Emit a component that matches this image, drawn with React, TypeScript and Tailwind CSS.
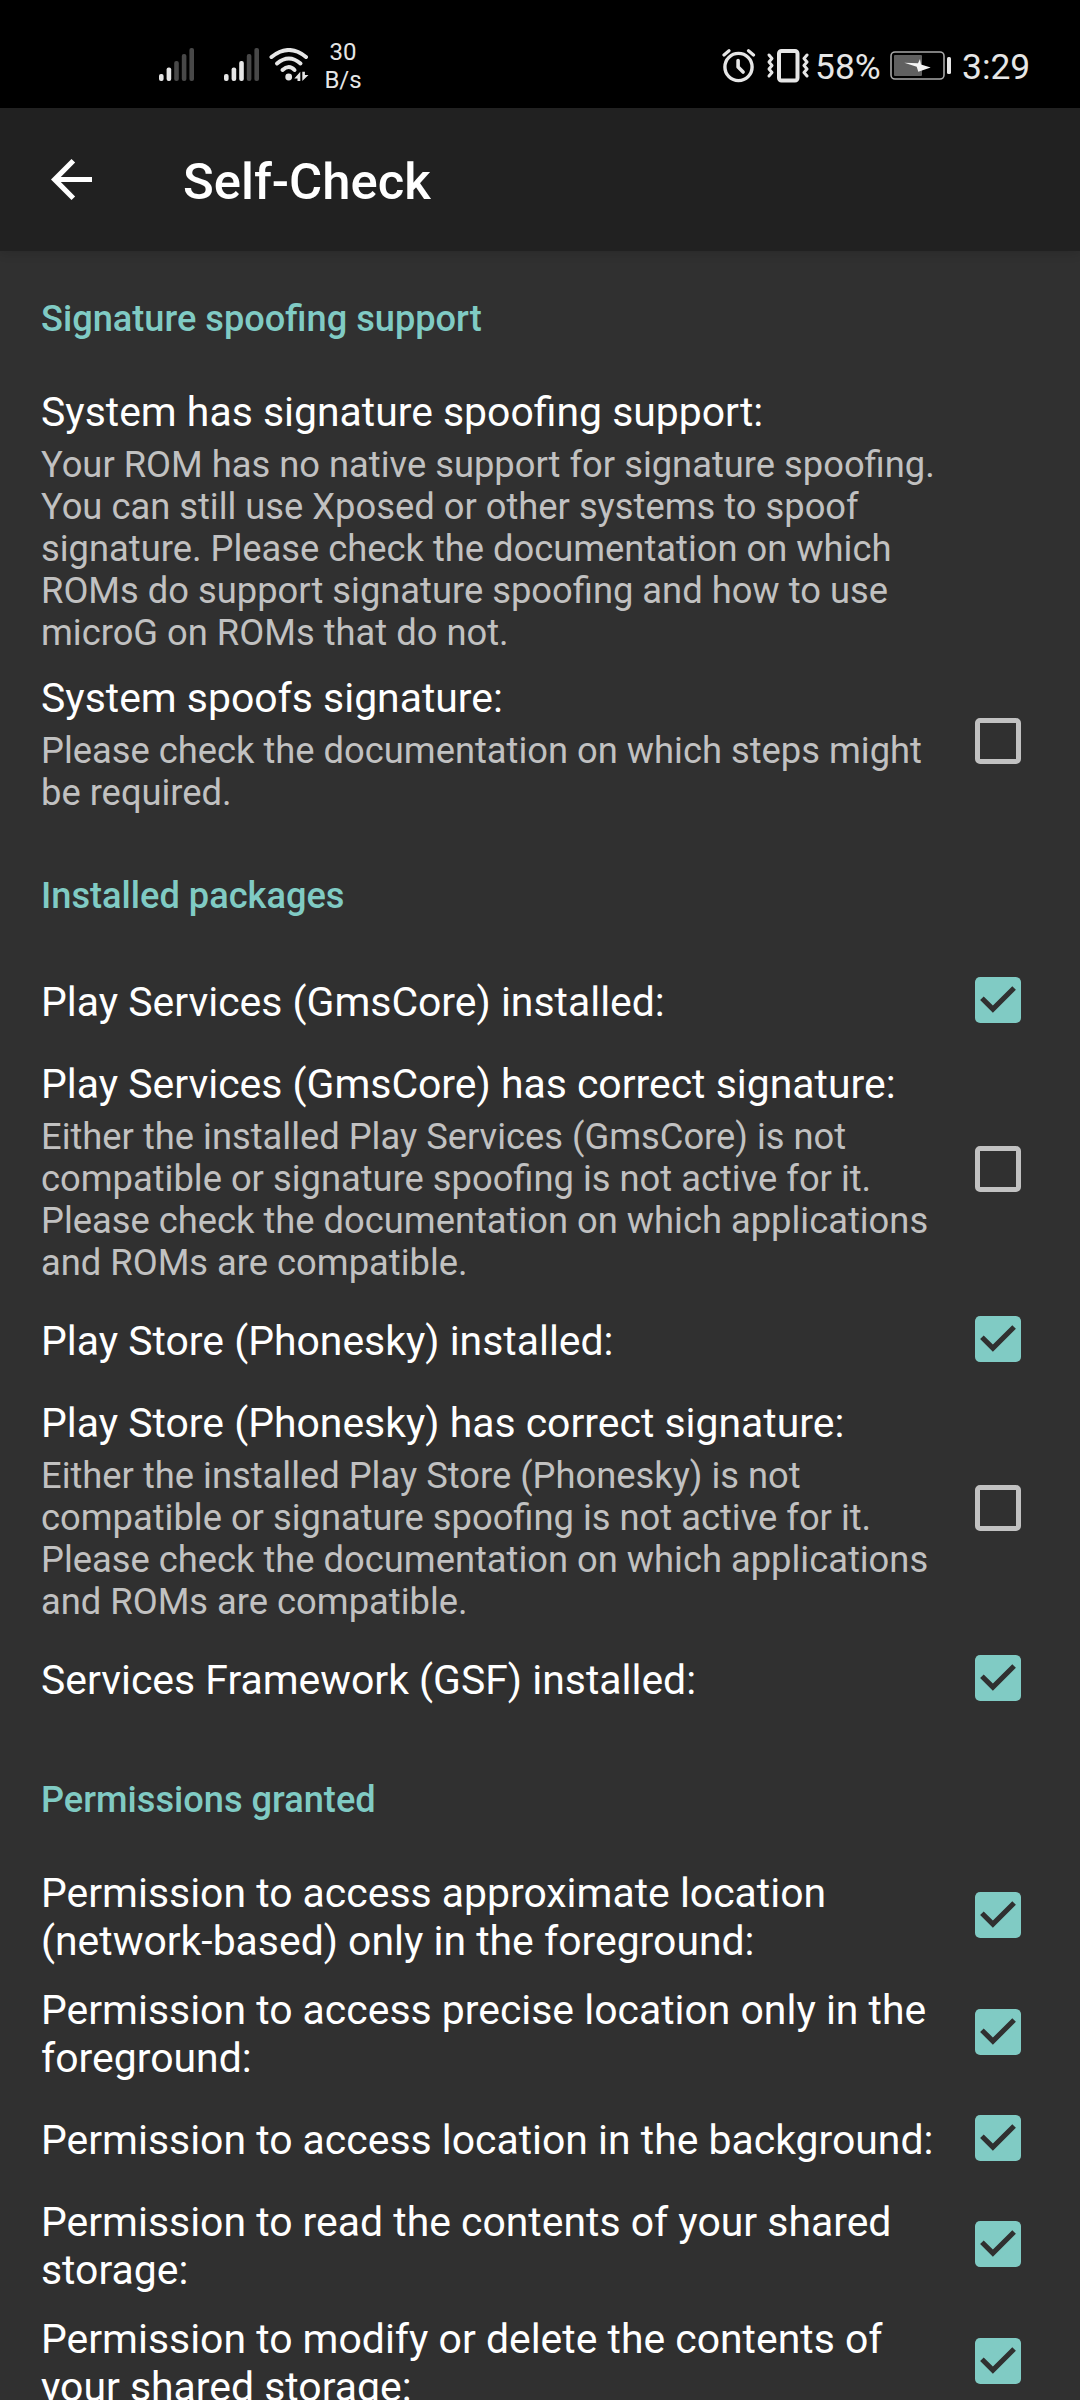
import React from "react";

type Item = { title: string; summary?: string[]; checked?: boolean };
type Section = { heading: string; spacing: string; items: Item[] };

const sections: Section[] = [
  {
    heading: "Signature spoofing support",
    spacing: "h-[124px] pt-[46px]",
    items: [
      {
        title: "System has signature spoofing support:",
        summary: [
          "Your ROM has no native support for signature spoofing.",
          "You can still use Xposed or other systems to spoof",
          "signature. Please check the documentation on which",
          "ROMs do support signature spoofing and how to use",
          "microG on ROMs that do not.",
        ],
      },
      {
        title: "System spoofs signature:",
        summary: ["Please check the documentation on which steps might", "be required."],
        checked: false,
      },
    ],
  },
  {
    heading: "Installed packages",
    spacing: "h-[131px] pt-[53px]",
    items: [
      { title: "Play Services (GmsCore) installed:", checked: true },
      {
        title: "Play Services (GmsCore) has correct signature:",
        summary: [
          "Either the installed Play Services (GmsCore) is not",
          "compatible or signature spoofing is not active for it.",
          "Please check the documentation on which applications",
          "and ROMs are compatible.",
        ],
        checked: false,
      },
      { title: "Play Store (Phonesky) installed:", checked: true },
      {
        title: "Play Store (Phonesky) has correct signature:",
        summary: [
          "Either the installed Play Store (Phonesky) is not",
          "compatible or signature spoofing is not active for it.",
          "Please check the documentation on which applications",
          "and ROMs are compatible.",
        ],
        checked: false,
      },
      { title: "Services Framework (GSF) installed:", checked: true },
    ],
  },
  {
    heading: "Permissions granted",
    spacing: "h-[131px] pt-[53px]",
    items: [
      { title: "Permission to access approximate location (network-based) only in the foreground:", checked: true },
      { title: "Permission to access precise location only in the foreground:", checked: true },
      { title: "Permission to access location in the background:", checked: true },
      { title: "Permission to read the contents of your shared storage:", checked: true },
      { title: "Permission to modify or delete the contents of your shared storage:", checked: true },
    ],
  },
];

function Checkbox({ checked }: { checked: boolean }) {
  if (!checked) {
    return <span className="block size-[46px] rounded-[5px] border-[5px] border-[#c1c1c1]" />;
  }
  return (
    <svg className="block size-[46px]" viewBox="3 3 18 18">
      <rect x="3" y="3" width="18" height="18" rx="2" fill="#80cbc4" />
      <path d="M10 17l-5-5 1.41-1.41L10 14.17l7.59-7.59L19 8z" fill="#303030" />
    </svg>
  );
}

function Row({ item }: { item: Item }) {
  return (
    <div className="flex min-h-[95px] items-center pl-[41px]">
      <div className={item.summary ? "w-[904px] pt-[13px] pb-[7px]" : "w-[904px] pt-[13px] pb-[8px]"}>
        <div className="text-[40.92px] leading-[48px] text-white">{item.title}</div>
        {item.summary && (
          <div className="mt-[8px] text-[36.32px] leading-[42px] text-[#c1c1c1]">
            {item.summary.map((line) => (
              <div key={line} className="whitespace-nowrap">{line}</div>
            ))}
          </div>
        )}
      </div>
      {item.checked !== undefined && (
        <div className="ml-[30px]">
          <Checkbox checked={item.checked} />
        </div>
      )}
    </div>
  );
}

/** Five rounded bars of rising height; the first `level` are lit. */
function Signal({ level }: { level: number }) {
  const tops = [26, 19.5, 13, 6, 0];
  return (
    <svg className="block h-[33px] w-[35px]" viewBox="0 0 35 33">
      {tops.map((top, i) => (
        <rect key={top} x={i * 7.6} y={top} width="4.6" height={33 - top} rx="2" fill={i < level ? "#e6e6e6" : "#484848"} />
      ))}
    </svg>
  );
}

function Wifi() {
  return (
    <svg className="block h-[33px] w-[40px]" viewBox="0 0 40 33" fill="none" stroke="#e6e6e6" strokeWidth="4" strokeLinecap="round">
      <path d="M2.5 9Q20 -5 37 9" />
      <path d="M8 15.5Q20 5.5 31.5 15.5" />
      <path d="M13.5 22Q20 16 25.5 22" />
      <circle cx="19.7" cy="29" r="3.4" fill="#e6e6e6" stroke="none" />
      <path d="M31.3 23.8V33h-2.8v-2.6h-3.2zM33.3 33v-9.2h2.6v3.2h3.6z" fill="#e6e6e6" stroke="none" />
    </svg>
  );
}

function Alarm() {
  return (
    <svg className="block h-[34px] w-[34px]" viewBox="0 0 34 34" fill="none" stroke="#e6e6e6" strokeLinecap="round" strokeLinejoin="round">
      <circle cx="16.5" cy="18" r="13.6" strokeWidth="3.4" />
      <path d="M16.1 11.5v6.5l5 5" strokeWidth="3.6" />
      <path d="M2 6L7 1.8M26.5 1.8l5 4.2" strokeWidth="3.2" />
    </svg>
  );
}

function Vibrate() {
  return (
    <svg className="block h-[34px] w-[43px]" viewBox="0 0 43 34" fill="none" stroke="#e6e6e6" strokeLinecap="round" strokeLinejoin="round">
      <rect x="13" y="2" width="18.5" height="29.5" rx="2.5" strokeWidth="4" />
      <path d="M3 6l3 3.5-3 3.5 3 3.5-3 3.5 3 3.5-3 3.5" strokeWidth="3" />
      <path d="M41 6l-3 3.5 3 3.5-3 3.5 3 3.5-3 3.5 3 3.5" strokeWidth="3" />
    </svg>
  );
}

function Battery() {
  return (
    <svg className="block h-[29px] w-[62px]" viewBox="0 0 62 29">
      <rect x="1" y="1" width="53" height="27" rx="4" fill="none" stroke="#a8a8a8" strokeWidth="1.6" />
      <rect x="4" y="4" width="28" height="21" rx="1" fill="#606060" />
      <path d="M14.3 11.7L26.7 15.8 28.3 20.7 40.7 16.5 31 13.5 30 8 28 12.2z" fill="#f4f4f4" />
      <rect x="57" y="6" width="4" height="17" rx="1.5" fill="#e6e6e6" />
    </svg>
  );
}

function StatusBar() {
  return (
    <div className="flex h-[108px] items-start bg-black text-[#e6e6e6]">
      <div className="mt-[48px] ml-[159px]"><Signal level={2} /></div>
      <div className="mt-[48px] ml-[30px]"><Signal level={3} /></div>
      <div className="mt-[48px] ml-[10px]"><Wifi /></div>
      <div className="mt-[38px] ml-[7px] w-[54px] text-center text-[24px] leading-[28px]">
        <div>30</div>
        <div>B/s</div>
      </div>
      <div className="mt-[49px] ml-auto"><Alarm /></div>
      <div className="mt-[49px] ml-[10px]"><Vibrate /></div>
      <div className="mt-[46px] ml-[6px] w-[66px] text-[35.4px] leading-[42px]">58%</div>
      <div className="mt-[51px] ml-[9px]"><Battery /></div>
      <div className="mt-[46px] mr-[50px] ml-[10px] w-[68px] text-[35.4px] leading-[42px]">3:29</div>
    </div>
  );
}

export default function App() {
  return (
    <div className="h-[2400px] w-[1080px] overflow-hidden bg-[#303030] font-['Roboto',sans-serif]">
      <StatusBar />
      <header className="relative flex h-[143px] items-center bg-[#212121] pl-[51px] text-white shadow-[0_2px_10px_rgba(0,0,0,0.14)]">
        <svg className="block size-[41px]" viewBox="4 4 16 16" fill="currentColor">
          <path d="M20 11H7.83l5.59-5.59L12 4l-8 8 8 8 1.41-1.41L7.83 13H20v-2z" />
        </svg>
        <h1 className="mt-[4px] ml-[91px] text-[50.8px] leading-[60px] font-medium">Self-Check</h1>
      </header>
      <main>
        {sections.map((section) => (
          <section key={section.heading}>
            <div className={section.spacing}>
              <h2 className="pl-[41px] text-[36.2px] leading-[43px] font-medium text-[#80cbc4]">{section.heading}</h2>
            </div>
            {section.items.map((item) => (
              <Row key={item.title} item={item} />
            ))}
          </section>
        ))}
      </main>
    </div>
  );
}
